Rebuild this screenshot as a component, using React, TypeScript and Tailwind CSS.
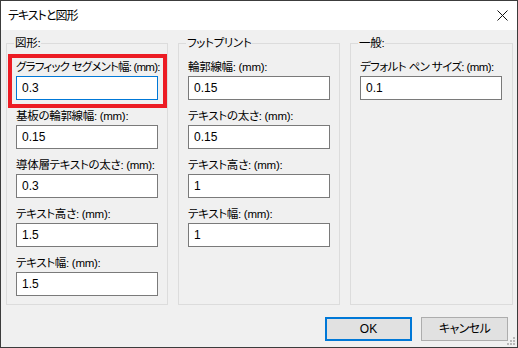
import React from "react";

const font = "font-['Liberation_Sans','Noto_Sans_CJK_JP',sans-serif] [font-feature-settings:'palt']";

const Field = ({ label, value, focused, tight }: { label: string; value: string; focused?: boolean; tight?: string }) => (
  <div className="flex flex-col">
    <label className={`h-[16px] leading-[16px] whitespace-nowrap text-[11.5px] ${tight ?? "tracking-[-0.3px]"}`}>{label}</label>
    <input
      defaultValue={value}
      readOnly
      className={`mt-[1px] h-[24px] w-[142px] bg-white px-[5px] text-[12px] outline-none border ${
        focused ? "border-[#0078d7]" : "border-[#7a7a7a]"
      }`}
    />
  </div>
);

const Group = ({ title, width, children }: { title: string; width: string; children: React.ReactNode }) => (
  <fieldset className={`${width} min-w-0 shrink-0 h-[270px] border border-[#dcdcdc] m-0 p-0`}>
    <legend className="ml-[7px] px-[1px] h-[16px] leading-[16px] text-[11.5px] tracking-[-0.3px]">{title}</legend>
    <div className="flex flex-col gap-[8px] pt-[8px] pl-[9px]">{children}</div>
  </fieldset>
);

export default function App() {
  return (
    <div className={`relative w-[518px] h-[348px] border border-[#3c3c3c] bg-[#f0f0f0] flex flex-col text-[12px] text-black ${font}`}>
      <div className="h-[29px] bg-white flex items-center justify-between pl-[7px] pr-[9px]">
        <span className="leading-[16px] tracking-[-1px]">テキストと図形</span>
        <svg width="11" height="11" viewBox="0 0 11 11" className="mb-[1px]">
          <path d="M0.5 0.5 L10.5 10.5 M10.5 0.5 L0.5 10.5" stroke="#111" strokeWidth="1" />
        </svg>
      </div>

      <div className="flex-1 flex flex-col px-[5px] pt-[5px]">
        <div className="flex gap-[10px]">
          <Group title="図形:" width="w-[162px]">
            <Field label="グラフィック セグメント幅: (mm):" value="0.3" focused tight="tracking-[-0.8px]" />
            <Field label="基板の輪郭線幅: (mm):" value="0.15" />
            <Field label="導体層テキストの太さ: (mm):" value="0.3" />
            <Field label="テキスト高さ: (mm):" value="1.5" />
            <Field label="テキスト幅: (mm):" value="1.5" />
          </Group>
          <Group title="フットプリント" width="w-[162px]">
            <Field label="輪郭線幅: (mm):" value="0.15" />
            <Field label="テキストの太さ: (mm):" value="0.15" />
            <Field label="テキスト高さ: (mm):" value="1" />
            <Field label="テキスト幅: (mm):" value="1" />
          </Group>
          <Group title="一般:" width="w-[163px]">
            <Field label="デフォルト ペン サイズ: (mm):" value="0.1" tight="tracking-[-0.6px]" />
          </Group>
        </div>

        <div className="flex justify-end gap-[9px] mt-[12px] pr-[4px]">
          <button className="w-[87px] h-[24px] bg-[#e1e1e1] border-2 border-[#0078d7]">OK</button>
          <button className="w-[87px] h-[24px] bg-[#e1e1e1] border border-[#adadad] tracking-[-0.6px]">キャンセル</button>
        </div>
      </div>

      <div className="absolute left-[7px] top-[53px] w-[159px] h-[54px] border-[4px] border-[#ec1c24] pointer-events-none" />

      <svg width="10" height="10" viewBox="0 0 10 10" className="absolute right-[1px] bottom-[1px]">
        <rect x="7" y="1" width="2" height="2" fill="#b8b8b8" />
        <rect x="4" y="4" width="2" height="2" fill="#b8b8b8" />
        <rect x="7" y="4" width="2" height="2" fill="#b8b8b8" />
        <rect x="1" y="7" width="2" height="2" fill="#b8b8b8" />
        <rect x="4" y="7" width="2" height="2" fill="#b8b8b8" />
        <rect x="7" y="7" width="2" height="2" fill="#b8b8b8" />
      </svg>
    </div>
  );
}
